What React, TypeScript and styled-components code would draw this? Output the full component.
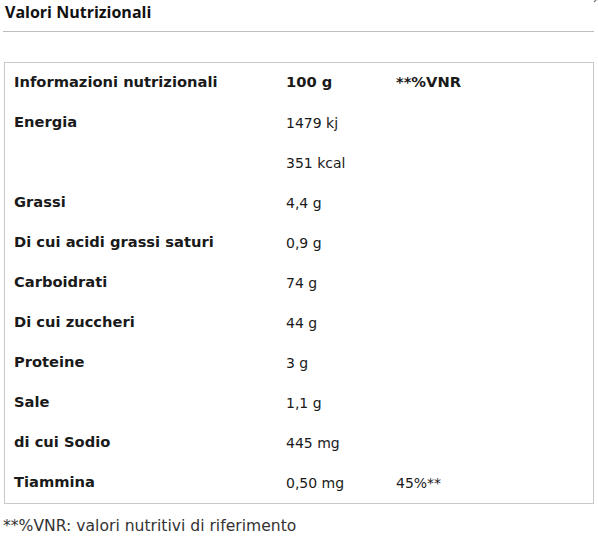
import React from 'react';
import styled, { createGlobalStyle } from 'styled-components';

const GlobalStyle = createGlobalStyle`
  body {
    margin: 0;
    background: #fff;
    color: #111;
    font-family: 'DejaVu Sans', sans-serif;
  }
`;

type Row = { label: string; amount: string; vnr?: string };

const rows: Row[] = [
  { label: 'Energia', amount: '1479 kj' },
  { label: '', amount: '351 kcal' },
  { label: 'Grassi', amount: '4,4 g' },
  { label: 'Di cui acidi grassi saturi', amount: '0,9 g' },
  { label: 'Carboidrati', amount: '74 g' },
  { label: 'Di cui zuccheri', amount: '44 g' },
  { label: 'Proteine', amount: '3 g' },
  { label: 'Sale', amount: '1,1 g' },
  { label: 'di cui Sodio', amount: '445 mg' },
  { label: 'Tiammina', amount: '0,50 mg', vnr: '45%**' },
];

const Page = styled.div`
  padding: 0 4px 0 3px;
`;

const Header = styled.div`
  position: relative;
  display: flex;
  align-items: center;
  height: 31px;
  border-bottom: 1px solid #bdbdbd;
  padding-left: 2px;
`;

const Title = styled.h2`
  margin: 0;
  font-family: 'Open Sans', sans-serif;
  font-size: 16px;
  font-weight: 700;
  color: #111;
  padding-bottom: 7px;
`;

const Chevron = styled.svg`
  position: absolute;
  right: -10px;
  top: -6px;
`;

const Table = styled.div`
  margin: 30px 0 0 1px;
  border: 1px solid #c8c8c8;
  display: grid;
  grid-template-columns: 272px 110px 1fr;
  grid-auto-rows: 40px;
`;

const Cell = styled.div<{ $bold?: boolean }>`
  display: flex;
  align-items: center;
  padding-left: 9px;
  padding-bottom: ${(p) => (p.$bold ? '3px' : '1px')};
  font-size: ${(p) => (p.$bold ? '14.7px' : '14px')};
  font-weight: ${(p) => (p.$bold ? 700 : 400)};
  color: #1a1a1a;
  white-space: nowrap;
`;

const Note = styled.p`
  margin: 13px 0 0;
  font-size: 15.6px;
  font-weight: 400;
  color: #333;
`;

export default function App() {
  return (
    <>
      <GlobalStyle />
      <Page>
        <Header>
          <Title>Valori Nutrizionali</Title>
          <Chevron width="12" height="12" viewBox="0 0 12 12">
            <path d="M2 8 L6 4 L10 8" stroke="#777" strokeWidth="1.2" fill="none" />
          </Chevron>
        </Header>
        <Table>
          <Cell $bold>Informazioni nutrizionali</Cell>
          <Cell $bold>100 g</Cell>
          <Cell $bold>**%VNR</Cell>
          {rows.map((r, i) => (
            <React.Fragment key={i}>
              <Cell $bold>{r.label}</Cell>
              <Cell>{r.amount}</Cell>
              <Cell>{r.vnr ?? ''}</Cell>
            </React.Fragment>
          ))}
        </Table>
        <Note>**%VNR: valori nutritivi di riferimento</Note>
      </Page>
    </>
  );
}
